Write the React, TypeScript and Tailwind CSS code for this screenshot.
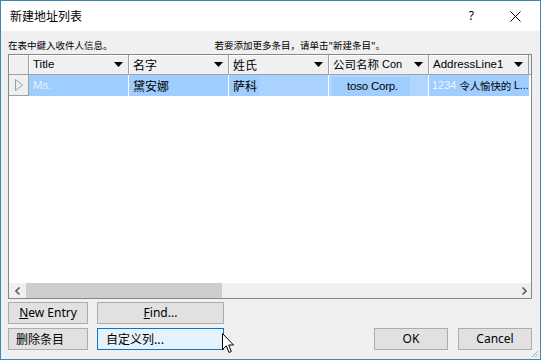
import React from "react";

const ui = { fontFamily: '"Segoe UI", "Noto Sans", "Noto Sans CJK SC", sans-serif' };
const grid = { fontFamily: '"Liberation Sans", "Noto Sans CJK SC", sans-serif' };
const cjk = { fontFamily: '"Noto Sans CJK SC", "Liberation Sans", sans-serif' };

function DropArrow() {
  return (
    <svg width="9" height="5" viewBox="0 0 9 5" className="ml-auto mr-[5px] shrink-0">
      <polygon points="0,0 9,0 4.5,5" fill="#000" />
    </svg>
  );
}

function HeaderCell({ label, cjkLabel }: { label: string; cjkLabel?: boolean }) {
  return (
    <div className="w-[100px] h-full flex items-center pl-[4px] border-r border-[#a0a0a0] shadow-[inset_1px_1px_0_#fff] text-[11.5px] text-black overflow-hidden whitespace-nowrap">
      <span style={cjkLabel ? cjk : grid} className={cjkLabel ? "text-[12px]" : ""}>
        {label}
      </span>
      <DropArrow />
    </div>
  );
}

function Btn({
  children,
  className = "",
  focused = false,
}: {
  children: React.ReactNode;
  className?: string;
  focused?: boolean;
}) {
  return (
    <div
      className={
        "h-[22px] flex items-center border text-[12px] text-black " +
        (focused ? "bg-[#e5f1fb] border-[#0078d7] " : "bg-[#e1e1e1] border-[#adadad] ") +
        className
      }
      style={ui}
    >
      {children}
    </div>
  );
}

export default function App() {
  return (
    <div className="relative w-[541px] h-[360px] border border-[#3c87b7] bg-[#f0f0f0] flex flex-col overflow-hidden">
      {/* title bar */}
      <div className="h-[30px] bg-white flex items-center pl-[9px] pr-[19px] shrink-0">
        <span className="text-[12px] text-black leading-none" style={cjk}>
          新建地址列表
        </span>
        <span className="ml-auto text-[12px] text-black" style={ui}>
          ?
        </span>
        <svg width="11" height="11" viewBox="0 0 11 11" className="ml-[36px]">
          <path d="M0.5 0.5 L10.5 10.5 M10.5 0.5 L0.5 10.5" stroke="#000" strokeWidth="1" />
        </svg>
      </div>

      <div className="flex-1 flex flex-col px-[7px]">
        {/* hint */}
        <div className="h-[23px] pt-[6px] flex items-center text-[9.5px] text-black whitespace-nowrap" style={cjk}>
          <span>在表中鍵入收件人信息。</span>
          <span className="ml-[102px]">若要添加更多条目，请单击"新建条目"。</span>
        </div>

        {/* grid */}
        <div className="w-[524px] h-[245px] border border-[#828790] bg-white flex flex-col shrink-0">
          <div className="h-[20px] flex bg-[#f0f0f0] border-b border-[#a0a0a0] shrink-0">
            <div className="w-[20px] h-full border-r border-[#a0a0a0] shadow-[inset_1px_1px_0_#fff]" />
            <HeaderCell label="Title" />
            <HeaderCell label="名字" cjkLabel />
            <HeaderCell label="姓氏" cjkLabel />
            <div className="w-[100px] h-full flex items-center pl-[4px] border-r border-[#a0a0a0] shadow-[inset_1px_1px_0_#fff] whitespace-nowrap overflow-hidden">
              <span className="text-[11.5px]" style={cjk}>
                公司名称
              </span>
              <span className="text-[11px] ml-[3px]" style={grid}>
                Con
              </span>
              <DropArrow />
            </div>
            <HeaderCell label="AddressLine1" />
            <div className="flex-1" />
          </div>

          <div className="h-[21px] flex shrink-0 text-[12px]">
            <div className="w-[20px] h-full bg-[#f0f0f0] border-r border-b border-[#a0a0a0] flex items-center justify-center">
              <svg width="8" height="12" viewBox="0 0 8 12">
                <polygon points="0.5,0.5 7.5,6 0.5,11.5" fill="none" stroke="#8aa0b8" strokeWidth="1" />
              </svg>
            </div>
            <div className="w-[100px] h-full bg-[#9fcdff] border-r border-white flex items-center pl-[4px] text-[#e6f1ff] text-[11.5px]" style={grid}>
              Ms.
            </div>
            <div className="w-[100px] h-full bg-[#9fcdff] border-r border-white flex items-center pl-[4px] text-black" style={cjk}>
              黛安娜
            </div>
            <div className="w-[100px] h-full bg-[#a9d2ff] border-r border-white flex items-center text-black">
              <span className="h-full flex items-center pl-[4px] pr-[2px] bg-[#9fcdff]" style={cjk}>
                萨科
              </span>
            </div>
            <div className="w-[100px] h-full bg-[#b0d6ff] border-r border-white flex items-end text-black">
              <span className="h-[19px] w-[78px] ml-[3px] flex items-center pl-[15px] bg-[#9fcdff] text-[11.5px] tracking-[-0.2px] whitespace-nowrap" style={grid}>
                toso Corp.
              </span>
            </div>
            <div className="w-[100px] h-full bg-[#9fcdff] flex items-center pl-[3px] whitespace-nowrap overflow-hidden">
              <span className="text-[#eef5ff] text-[11px]" style={grid}>
                1234
              </span>
              <span className="ml-[3px] text-black text-[10.5px] tracking-[-0.2px]" style={cjk}>
                令人愉快的
              </span>
              <span className="ml-[3px] text-black text-[10.5px]" style={grid}>
                L...
              </span>
            </div>
            <div className="flex-1" />
          </div>

          <div className="flex-1" />

          {/* horizontal scrollbar */}
          <div className="h-[15px] flex bg-[#f0f0f0] shrink-0">
            <div className="w-[17px] h-full flex items-center justify-center">
              <svg width="6" height="8" viewBox="0 0 6 8">
                <path d="M4.5 0.5 L1 4 L4.5 7.5" fill="none" stroke="#606060" strokeWidth="1.6" />
              </svg>
            </div>
            <div className="w-[196px] h-full bg-[#cdcdcd]" />
            <div className="flex-1" />
            <div className="w-[17px] h-full flex items-center justify-center pl-[3px]">
              <svg width="6" height="8" viewBox="0 0 6 8">
                <path d="M1.5 0.5 L5 4 L1.5 7.5" fill="none" stroke="#606060" strokeWidth="1.6" />
              </svg>
            </div>
          </div>
        </div>

        {/* buttons */}
        <div className="mt-[3px] flex gap-[9px]">
          <Btn className="w-[80px] justify-center">
            <span>
              <u>N</u>ew Entry
            </span>
          </Btn>
          <Btn className="w-[127px] justify-center">
            <span>
              <u>F</u>ind...
            </span>
          </Btn>
        </div>
        <div className="mt-[4px] flex gap-[9px] pr-[1px]">
          <Btn className="w-[80px] pl-[7px] text-[10.5px]">
            <span style={cjk}>删除条目</span>
          </Btn>
          <Btn focused className="w-[127px] pl-[8px]">
            <span style={cjk}>自定义列...</span>
          </Btn>
          <Btn className="w-[74px] justify-center ml-auto">OK</Btn>
          <Btn className="w-[74px] justify-center ml-[1px]">Cancel</Btn>
        </div>
      </div>

      {/* mouse pointer */}
      <svg width="13" height="21" viewBox="0 0 13 21" className="absolute left-[221px] top-[332px]">
        <path
          d="M0.5 0.5 L0.5 16.5 L4.3 12.8 L7 19.5 L9.3 18.5 L6.7 12 L11.5 12 Z"
          fill="#fff"
          stroke="#000"
          strokeWidth="1"
          strokeLinejoin="miter"
        />
      </svg>

      {/* resize grip */}
      <svg width="8" height="8" viewBox="0 0 8 8" className="absolute right-[1px] bottom-[1px]">
        <path d="M7 1 L1 7 M7 4 L4 7 M7 6.5 L6.5 7" stroke="#b0b0b0" strokeWidth="1" />
      </svg>
    </div>
  );
}
